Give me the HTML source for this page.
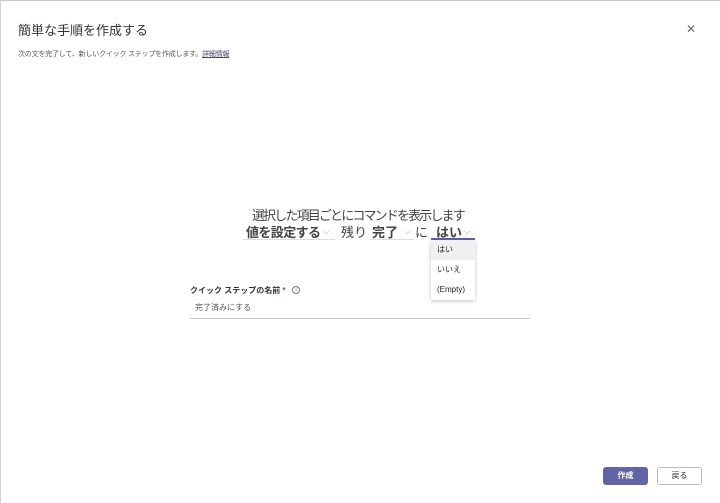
<!DOCTYPE html><html><head><meta charset="utf-8"><style>
body{margin:0;width:720px;height:503px;background:#fff;font-family:"Liberation Sans","Noto Sans CJK JP",sans-serif;position:relative;overflow:hidden;color:#242424}
.a{position:absolute;white-space:nowrap}
.c{position:absolute;font-size:8px;color:#999}
</style></head><body>
<div style="position:absolute;left:0;top:0;width:720px;height:1px;background:#c8c8c8"></div>
<div style="position:absolute;left:0;top:0;width:1px;height:503px;background:#d0d0d0"></div>
<div class="a" style="left:18px;top:20px;font-size:13px;color:#333">簡単な手順を作成する</div>
<div class="a" style="left:686px;top:22px;font-size:12px;color:#666">✕</div>
<div class="a" style="left:18px;top:49px;font-size:7px;letter-spacing:-0.2px;color:#555">次の文を完了して、新しいクイック ステップを作成します。<span style="color:#464775;text-decoration:underline">詳細情報</span></div>
<div class="a" style="left:252px;top:205px;font-size:13px;letter-spacing:-1.85px;color:#444">選択した項目ごとにコマンドを表示します</div>
<div class="a" style="left:246px;top:222px;font-size:13px;letter-spacing:-0.6px;color:#444;font-weight:600">値を設定する</div>
<div class="c" style="left:323px;top:227px">⌵</div>
<div style="position:absolute;left:243px;top:239px;width:92px;height:1px;background:#ddd"></div>
<div class="a" style="left:341px;top:222px;font-size:13px;color:#444">残り</div>
<div class="a" style="left:372px;top:222px;font-size:13px;color:#444;font-weight:600">完了</div>
<div class="c" style="left:404px;top:227px">⌵</div>
<div style="position:absolute;left:369px;top:239px;width:45px;height:1px;background:#ddd"></div>
<div class="a" style="left:415px;top:222px;font-size:13px;color:#444">に</div>
<div class="a" style="left:436px;top:222px;font-size:13px;color:#444;font-weight:600">はい</div>
<div class="c" style="left:464px;top:227px">⌵</div>
<div style="position:absolute;left:431px;top:238px;width:44px;height:2px;background:#6264a7"></div>
<div style="position:absolute;left:431px;top:240px;width:44px;height:60px;background:#fff;box-shadow:0 1px 4px rgba(0,0,0,.25)">
<div style="height:20px;background:#f0f0f0;font-size:8px;padding-left:6px;line-height:20px">はい</div>
<div style="height:20px;font-size:8px;padding-left:6px;line-height:20px">いいえ</div>
<div style="height:20px;font-size:8px;padding-left:6px;line-height:20px">(Empty)</div>
</div>
<div class="a" style="left:190px;top:285px;font-size:8px;font-weight:bold;color:#333">クイック ステップの名前 <span style="color:#c4314b">*</span></div>
<div style="position:absolute;left:292px;top:286px;width:6px;height:6px;border:1px solid #777;border-radius:50%;font-size:5px;line-height:6px;text-align:center;color:#555">i</div>
<div class="a" style="left:195px;top:302px;font-size:8px;color:#555">完了済みにする</div>
<div style="position:absolute;left:190px;top:318px;width:340px;height:1px;background:#ccc"></div>
<div style="position:absolute;left:603px;top:467px;width:45px;height:18px;background:#6264a7;border-radius:3px;color:#fff;font-size:8px;font-weight:bold;text-align:center;line-height:18px">作成</div>
<div style="position:absolute;left:657px;top:467px;width:43px;height:16px;border:1px solid #bbb;border-radius:3px;color:#333;font-size:8px;text-align:center;line-height:16px">戻る</div>
</body></html>
